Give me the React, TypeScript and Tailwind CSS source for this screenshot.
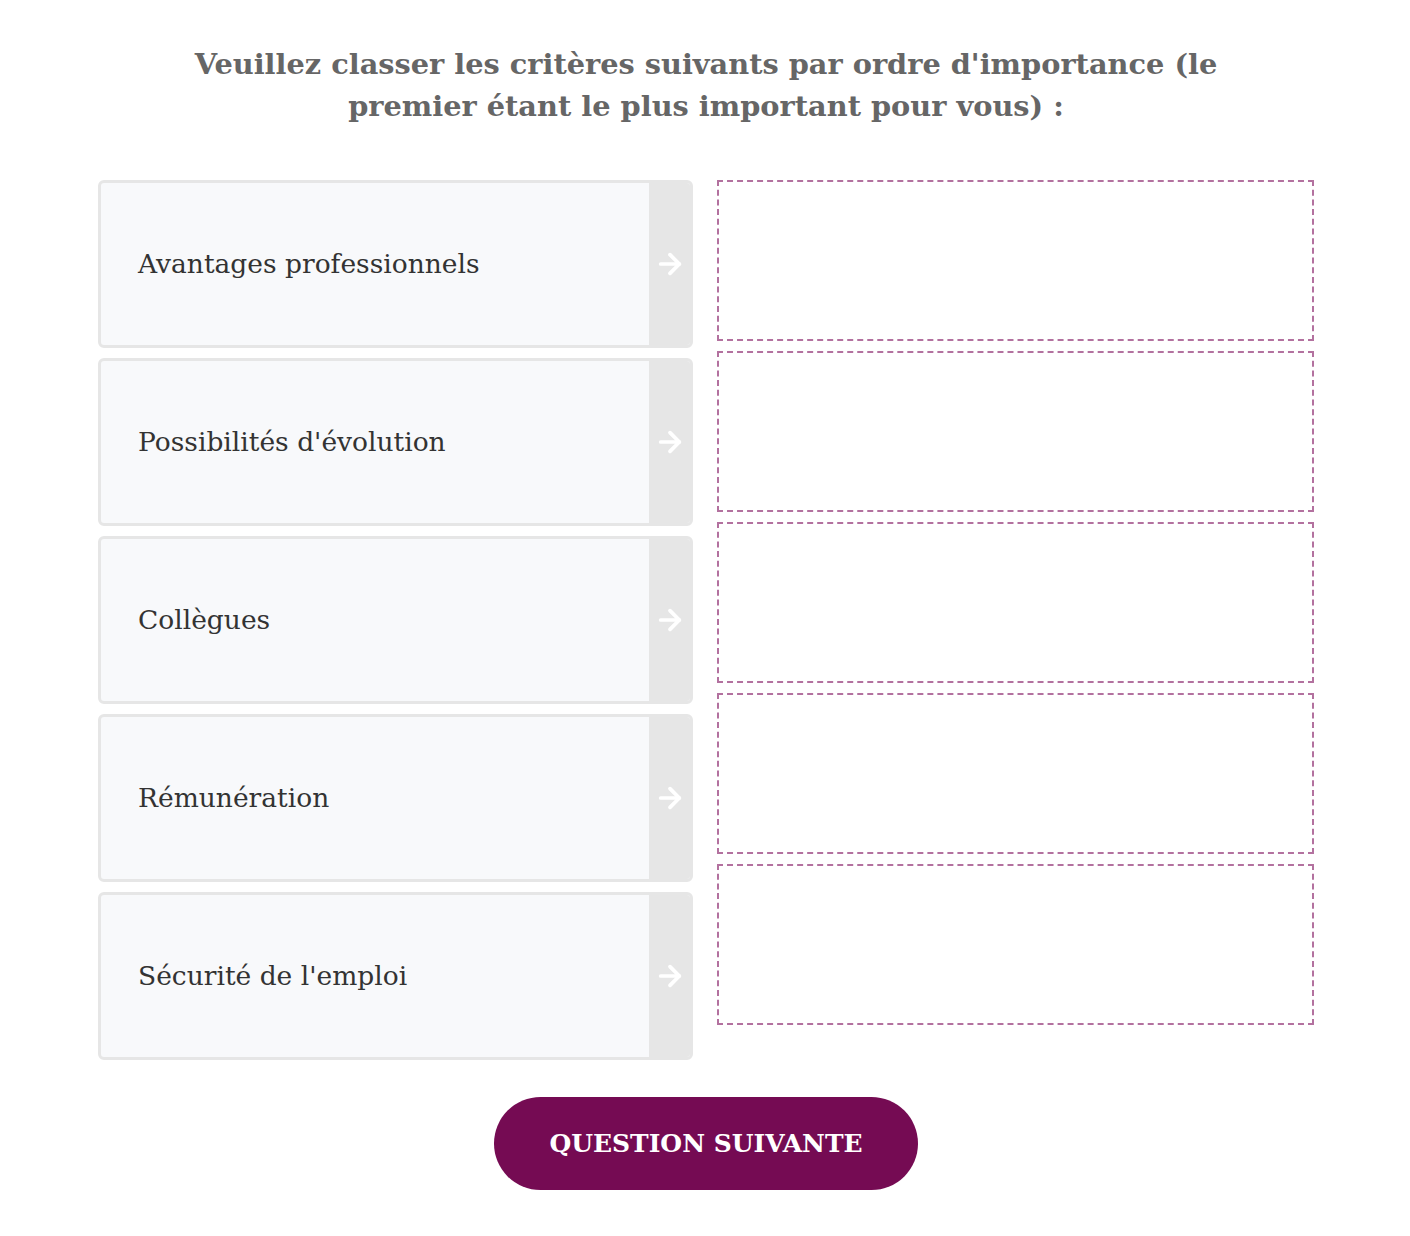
import { ArrowRight } from "lucide-react";

export default function App() {
  const criteres = [
    "Avantages professionnels",
    "Possibilités d'évolution",
    "Collègues",
    "Rémunération",
    "Sécurité de l'emploi",
  ];
  const font = { fontFamily: '"DejaVu Serif", "Liberation Serif", serif' };
  return (
    <div className="min-h-screen bg-white flex justify-center pl-[2px]" style={font}>
      <div className="w-[1216px] pt-[43px]">
        <h2 className="text-center font-bold text-[#666666] text-[28.8px] leading-[42px] px-[90px]">
          Veuillez classer les critères suivants par ordre d'importance (le
          premier étant le plus important pour vous) :
        </h2>

        <div className="flex gap-[24px] mt-[53px]">
          <div className="w-[595px] flex flex-col gap-[10px]">
            {criteres.map((c, i) => (
              <div
                key={i}
                className="h-[168px] flex border-[3px] border-[#e6e6e6] rounded-[6px] bg-[#f8f9fb] overflow-hidden"
              >
                <div className="flex-1 flex items-center pl-[37px] text-[26.5px] text-[#333333]">
                  {c}
                </div>
                <div className="w-[41px] bg-[#e6e6e6] flex items-center justify-center">
                  <ArrowRight className="w-[32px] h-[32px] text-white" strokeWidth={2.8} />
                </div>
              </div>
            ))}
          </div>
          <div className="flex-1 flex flex-col gap-[10px]">
            {criteres.map((_, i) => (
              <div
                key={i}
                className="h-[161px] border-2 border-dashed border-[#b3719f]"
              />
            ))}
          </div>
        </div>

        <div className="flex justify-center mt-[37px]">
          <button className="w-[424px] h-[93px] rounded-full bg-[#750b53] text-white font-bold text-[25px] uppercase">
            Question suivante
          </button>
        </div>
      </div>
    </div>
  );
}
